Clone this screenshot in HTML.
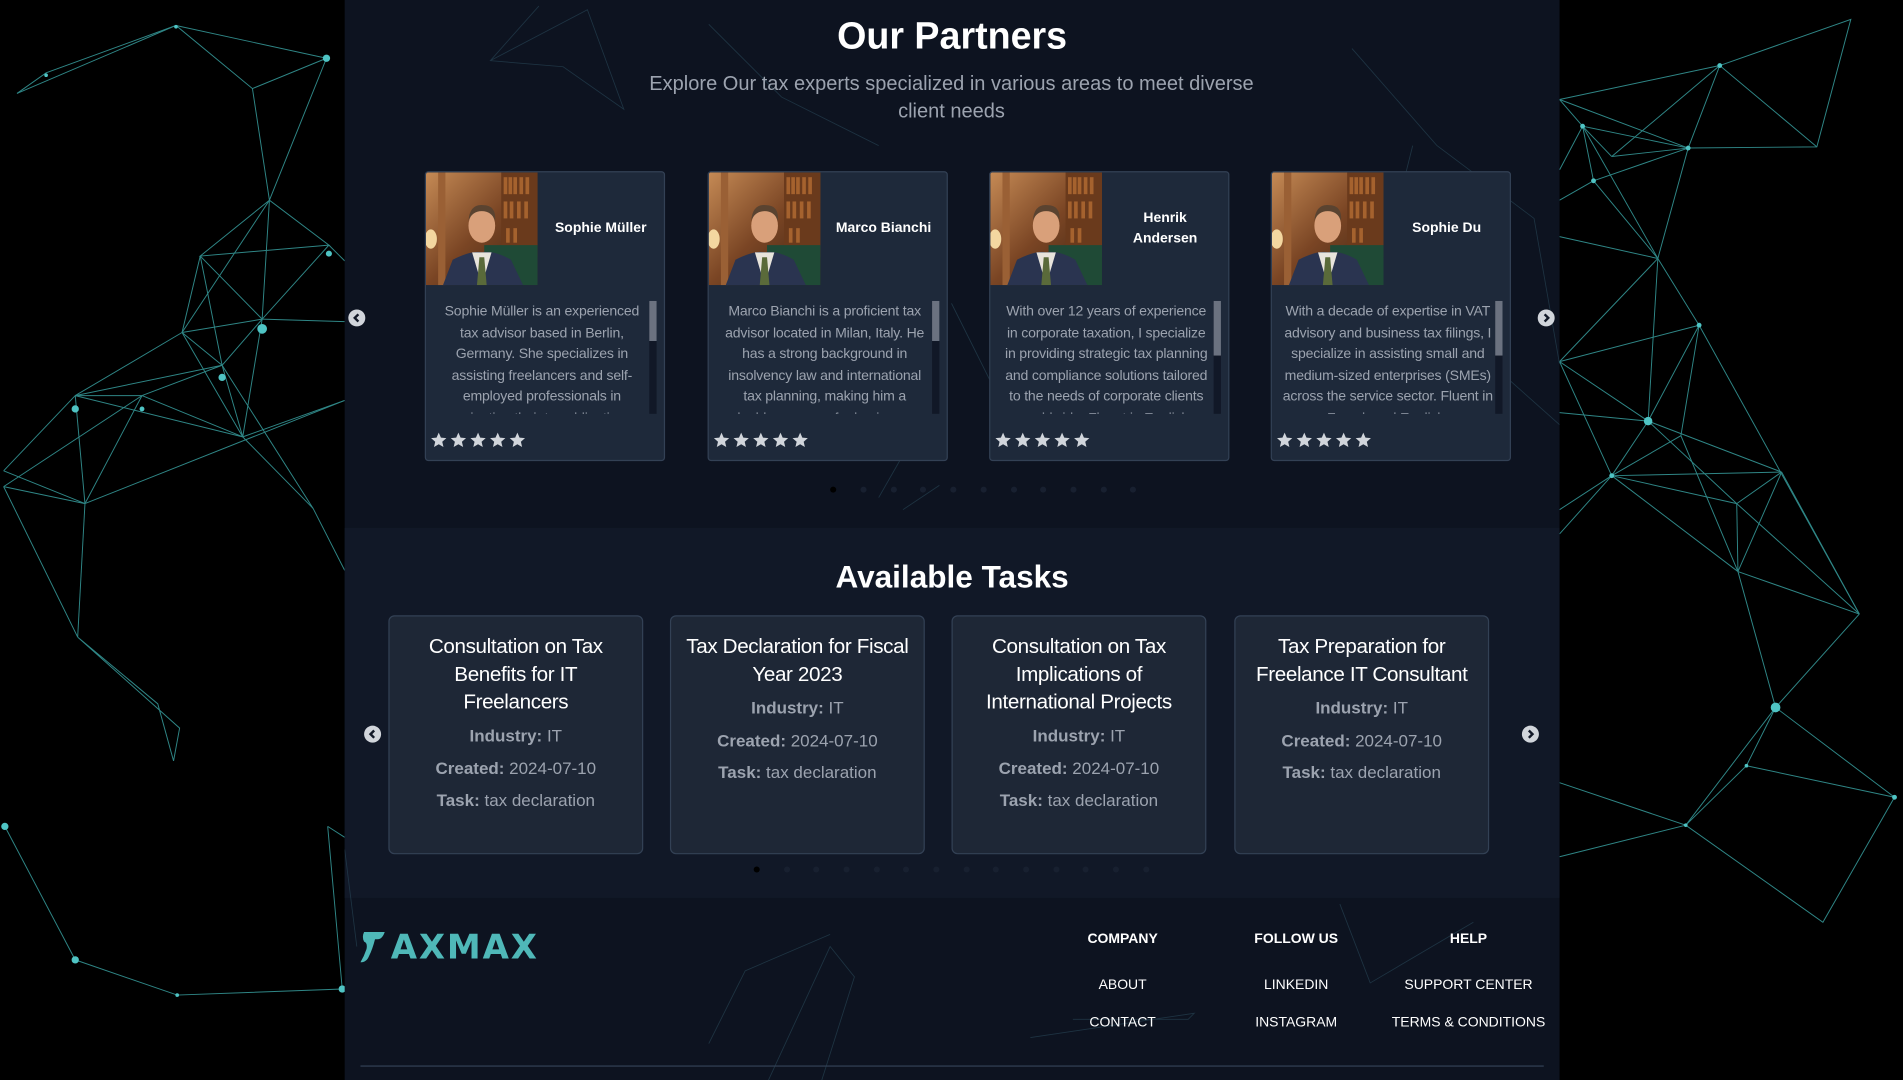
<!DOCTYPE html>
<html><head><meta charset="utf-8">
<style>
html,body{margin:0;padding:0;background:#000;width:1903px;height:1080px;overflow:hidden;}
#s{position:absolute;left:0;top:0;width:1568px;height:890px;transform:scale(1.21365,1.2135);transform-origin:0 0;font-family:"Liberation Sans",Arial,sans-serif;}
.abs{position:absolute}
.panel{left:284px;top:0;width:1001px;height:890px;background:#0d1320;}
.tasksbg{left:284px;top:435px;width:1001px;height:305px;background:#111827;}
h1{position:absolute;margin:0;left:284px;width:1001px;text-align:center;color:#fff;}
.sub{left:530px;width:508px;top:58px;text-align:center;color:#9ca3af;font-size:16.5px;line-height:23px;}
.pc{position:absolute;top:141px;width:196px;height:237px;background:#1e293a;border:1px solid #334155;border-radius:3px;overflow:hidden;}
.pc svg.ph{position:absolute;left:0;top:0;}
.pc .nm{position:absolute;left:92px;width:104px;top:0;height:93px;display:flex;align-items:center;justify-content:center;text-align:center;color:#fff;font-weight:bold;font-size:11.5px;line-height:17px;}
.pc .ds{position:absolute;left:8px;width:175px;top:106px;height:93px;overflow:hidden;color:#9ca3af;font-size:11.6px;line-height:17.5px;text-align:center;letter-spacing:-0.15px;}
.pc .ds p{margin:0;padding:0;}
.pc .sb{position:absolute;left:184px;top:106px;width:6px;height:93px;background:#111827;}
.pc .sb i{position:absolute;left:0;top:0;width:6px;height:33px;background:#6b7280;}
.pc .st{position:absolute;left:4px;top:214px;}
.arr{position:absolute;width:14px;height:14px;border-radius:50%;background:#d1d5db;}
.arr svg{position:absolute;left:0;top:0}
.dot{position:absolute;width:5px;height:5px;border-radius:50%;background:#182030;}
.tc{position:absolute;top:507px;width:210px;height:197px;background:#1e2736;border:1px solid #334155;border-radius:5px;text-align:center;box-sizing:border-box;padding:13px 10px 0;}
.tc .t{color:#fff;font-size:17px;line-height:23px;letter-spacing:-0.3px;}
.tc .f{color:#9ca3af;font-size:14px;line-height:26.5px;}
.tc .f1{margin-top:3px}
.tc b{color:#9ca3af;}
.fh{position:absolute;top:768px;color:#fff;font-weight:bold;font-size:11.5px;width:150px;text-align:center;}
.fl{position:absolute;color:#fff;font-size:11.5px;width:160px;text-align:center;}
</style></head><body>
<div id="s">
<svg class="abs" style="left:0;top:0" width="1568" height="890">
<g stroke="#3fb3b3" stroke-width="0.8" fill="none" opacity="0.75">
<polyline points="14,77 38,60 145,21 208,73 269,48"/>
<line x1="14" y1="77" x2="145" y2="21"/>
<line x1="145" y1="21" x2="269" y2="48"/>
<line x1="208" y1="73" x2="222" y2="165"/>
<line x1="269" y1="48" x2="222" y2="165"/>
<polyline points="222,165 165,211 271,202 222,165 216,263 271,202"/>
<line x1="222" y1="165" x2="150" y2="274"/>
<line x1="165" y1="211" x2="216" y2="263"/>
<line x1="165" y1="211" x2="150" y2="274"/>
<line x1="165" y1="211" x2="183" y2="301"/>
<line x1="150" y1="274" x2="216" y2="263"/>
<line x1="150" y1="274" x2="183" y2="301"/>
<line x1="216" y1="263" x2="183" y2="301"/>
<line x1="216" y1="263" x2="200" y2="360"/>
<line x1="150" y1="274" x2="200" y2="360"/>
<line x1="183" y1="301" x2="200" y2="360"/>
<line x1="150" y1="274" x2="62" y2="326"/>
<line x1="62" y1="326" x2="117" y2="326"/>
<line x1="117" y1="326" x2="183" y2="301"/>
<line x1="62" y1="326" x2="183" y2="301"/>
<line x1="117" y1="326" x2="200" y2="360"/>
<line x1="62" y1="326" x2="200" y2="360"/>
<line x1="117" y1="326" x2="70" y2="415"/>
<line x1="62" y1="326" x2="70" y2="415"/>
<line x1="62" y1="326" x2="3" y2="388"/>
<line x1="117" y1="326" x2="3" y2="401"/>
<line x1="3" y1="388" x2="70" y2="415"/>
<line x1="3" y1="401" x2="70" y2="415"/>
<line x1="200" y1="360" x2="258" y2="419"/>
<line x1="183" y1="301" x2="258" y2="419"/>
<line x1="200" y1="360" x2="284" y2="330"/>
<line x1="70" y1="415" x2="284" y2="330"/>
<line x1="216" y1="263" x2="284" y2="265"/>
<line x1="271" y1="202" x2="284" y2="215"/>
<line x1="3" y1="401" x2="64" y2="525"/>
<line x1="70" y1="415" x2="64" y2="525"/>
<polyline points="64,525 148,600 143,627 130,580 64,525"/>
<line x1="258" y1="419" x2="284" y2="470"/>
<line x1="4" y1="681" x2="62" y2="791"/>
<polyline points="62,791 146,820 282,815 270,681"/>
<line x1="270" y1="681" x2="284" y2="690"/>
<line x1="1285" y1="82" x2="1304" y2="104"/>
<line x1="1285" y1="82" x2="1417" y2="54"/>
<line x1="1285" y1="82" x2="1391" y2="122"/>
<line x1="1304" y1="104" x2="1391" y2="122"/>
<line x1="1304" y1="104" x2="1313" y2="149"/>
<line x1="1304" y1="104" x2="1328" y2="129"/>
<line x1="1304" y1="104" x2="1366" y2="213"/>
<line x1="1313" y1="149" x2="1391" y2="122"/>
<line x1="1328" y1="129" x2="1391" y2="122"/>
<line x1="1328" y1="129" x2="1417" y2="54"/>
<line x1="1313" y1="149" x2="1285" y2="165"/>
<line x1="1313" y1="149" x2="1366" y2="213"/>
<line x1="1304" y1="104" x2="1285" y2="140"/>
<polyline points="1417,54 1525,16 1497,121 1391,122 1417,54 1497,121"/>
<line x1="1391" y1="122" x2="1366" y2="213"/>
<line x1="1285" y1="195" x2="1366" y2="213"/>
<line x1="1366" y1="213" x2="1400" y2="268"/>
<line x1="1366" y1="213" x2="1285" y2="298"/>
<line x1="1366" y1="213" x2="1358" y2="347"/>
<line x1="1285" y1="298" x2="1400" y2="268"/>
<line x1="1400" y1="268" x2="1358" y2="347"/>
<line x1="1400" y1="268" x2="1385" y2="359"/>
<line x1="1400" y1="268" x2="1532" y2="506"/>
<line x1="1285" y1="298" x2="1358" y2="347"/>
<line x1="1285" y1="298" x2="1328" y2="392"/>
<line x1="1285" y1="340" x2="1358" y2="347"/>
<line x1="1358" y1="347" x2="1328" y2="392"/>
<line x1="1358" y1="347" x2="1468" y2="389"/>
<line x1="1358" y1="347" x2="1431" y2="415"/>
<line x1="1385" y1="359" x2="1328" y2="392"/>
<line x1="1385" y1="359" x2="1432" y2="471"/>
<line x1="1328" y1="392" x2="1468" y2="389"/>
<line x1="1328" y1="392" x2="1431" y2="415"/>
<line x1="1328" y1="392" x2="1432" y2="471"/>
<line x1="1328" y1="392" x2="1285" y2="420"/>
<line x1="1328" y1="392" x2="1285" y2="440"/>
<line x1="1468" y1="389" x2="1431" y2="415"/>
<line x1="1468" y1="389" x2="1432" y2="471"/>
<line x1="1468" y1="389" x2="1532" y2="506"/>
<line x1="1431" y1="415" x2="1432" y2="471"/>
<line x1="1431" y1="415" x2="1532" y2="506"/>
<line x1="1432" y1="471" x2="1532" y2="506"/>
<line x1="1432" y1="471" x2="1463" y2="583"/>
<line x1="1532" y1="506" x2="1463" y2="583"/>
<polyline points="1463,583 1439,631 1389,680 1463,583 1561,657 1502,760 1389,680 1285,645"/>
<line x1="1439" y1="631" x2="1561" y2="657"/>
<line x1="1389" y1="680" x2="1285" y2="706"/>
</g>
<g fill="#4fc4c4">
<circle cx="269" cy="48" r="3"/><circle cx="216" cy="271" r="4"/><circle cx="271" cy="209" r="2.5"/><circle cx="183" cy="311" r="3"/><circle cx="62" cy="337" r="3"/><circle cx="117" cy="337" r="2"/><circle cx="38" cy="62" r="1.5"/><circle cx="145" cy="22" r="1.5"/><circle cx="4" cy="681" r="3"/><circle cx="62" cy="791" r="3"/><circle cx="146" cy="820" r="1.5"/><circle cx="282" cy="815" r="3"/>
<circle cx="1304" cy="104" r="2"/><circle cx="1391" cy="122" r="2"/><circle cx="1417" cy="54" r="2"/><circle cx="1400" cy="268" r="2"/><circle cx="1358" cy="347" r="3.5"/><circle cx="1328" cy="392" r="2"/><circle cx="1463" cy="583" r="4"/><circle cx="1561" cy="657" r="2"/><circle cx="1389" cy="680" r="1.5"/><circle cx="1439" cy="631" r="1.5"/><circle cx="1313" cy="149" r="2"/>
</g>
</svg>
<div class="abs panel"></div>
<div class="abs tasksbg"></div>
<svg class="abs" style="left:284px;top:0" width="1001" height="890">
<g stroke="#2a4a5a" stroke-width="0.7" fill="none" opacity="0.6">
<polyline points="160,5 120,50 180,55 230,90 200,8 120,50"/>
<polyline points="300,20 360,80 440,120"/>
<polyline points="830,40 900,120 980,180 1001,300"/>
<polyline points="880,120 860,200 900,260 1001,350"/>
<line x1="500" y1="250" x2="540" y2="330"/>
<line x1="440" y1="410" x2="480" y2="340"/>
<line x1="460" y1="420" x2="490" y2="400"/>
<polyline points="340,910 400,780 420,805 390,900"/>
<polyline points="300,860 330,800 400,770"/>
<polyline points="565,855 700,835 695,840 600,840"/>
<polyline points="820,745 845,810 930,760"/>
<line x1="0" y1="700" x2="10" y2="780"/>
</g>
</svg>

<h1 style="top:12px;font-size:31px;font-weight:900;">Our Partners</h1>
<div class="abs sub">Explore Our tax experts specialized in various areas to meet diverse client needs</div>

<svg width="0" height="0" style="position:absolute"><defs>
<linearGradient id="bg" x1="0" y1="0" x2="1" y2="1"><stop offset="0" stop-color="#c58a55"/><stop offset="0.5" stop-color="#7a4524"/><stop offset="1" stop-color="#3a2213"/></linearGradient>
<symbol id="por" viewBox="0 0 92 93">
<rect width="92" height="93" fill="url(#bg)"/>
<rect x="62" y="0" width="30" height="70" fill="#6a3a1c"/>
<g fill="#a5622e"><rect x="64" y="4" width="3" height="14"/><rect x="68" y="4" width="3" height="14"/><rect x="72" y="4" width="3" height="14"/><rect x="77" y="4" width="3" height="14"/><rect x="82" y="4" width="3" height="14"/><rect x="64" y="24" width="3" height="14"/><rect x="69" y="24" width="3" height="14"/><rect x="75" y="24" width="3" height="14"/><rect x="81" y="24" width="3" height="14"/><rect x="66" y="46" width="3" height="12"/><rect x="72" y="46" width="3" height="12"/></g>
<rect x="10" y="0" width="6" height="93" fill="#9a6035"/>
<ellipse cx="4" cy="55" rx="5" ry="8" fill="#f3d7a0"/>
<rect x="48" y="60" width="44" height="33" fill="#1f4a36"/>
<path d="M14 93 L22 72 Q38 64 46 66 Q56 64 70 72 L80 93Z" fill="#2a3450"/>
<path d="M38 66 L46 93 L54 66Z" fill="#e8e4dc"/>
<path d="M44 70 L48 70 L50 93 L42 93Z" fill="#5a6a3a"/>
<ellipse cx="46" cy="44" rx="11" ry="14" fill="#d9a07a"/>
<path d="M35 40 Q36 26 47 27 Q58 27 57 40 Q54 32 46 32 Q38 32 35 40Z" fill="#5a4330"/>
</symbol>
<symbol id="stars" viewBox="0 0 82 14">
<g fill="#d1d5db">
<path id="st" d="M6.5 0.5 L8.3 4.6 L12.8 5 L9.4 8 L10.4 12.4 L6.5 10.1 L2.6 12.4 L3.6 8 L0.2 5 L4.7 4.6Z"/>
<use href="#st" x="16.2"/><use href="#st" x="32.4"/><use href="#st" x="48.6"/><use href="#st" x="64.8"/>
</g></symbol>
</defs></svg>

<div class="pc" style="left:350px"><svg class="ph" width="92" height="93"><use href="#por"/></svg><div class="nm">Sophie Müller</div>
<div class="ds"><p>Sophie Müller is an experienced tax advisor based in Berlin, Germany. She specializes in assisting freelancers and self-employed professionals in navigating their tax obligations.</p></div><div class="sb"><i></i></div>
<svg class="st" width="82" height="14"><use href="#stars"/></svg></div>
<div class="pc" style="left:583px"><svg class="ph" width="92" height="93"><use href="#por"/></svg><div class="nm">Marco Bianchi</div>
<div class="ds"><p>Marco Bianchi is a proficient tax advisor located in Milan, Italy. He has a strong background in insolvency law and international tax planning, making him a valuable resource for businesses.</p></div><div class="sb"><i></i></div>
<svg class="st" width="82" height="14"><use href="#stars"/></svg></div>
<div class="pc" style="left:815px"><svg class="ph" width="92" height="93"><use href="#por"/></svg><div class="nm">Henrik<br>Andersen</div>
<div class="ds"><p>With over 12 years of experience in corporate taxation, I specialize in providing strategic tax planning and compliance solutions tailored to the needs of corporate clients worldwide. Fluent in English.</p></div><div class="sb"><i style="height:45px"></i></div>
<svg class="st" width="82" height="14"><use href="#stars"/></svg></div>
<div class="pc" style="left:1047px"><svg class="ph" width="92" height="93"><use href="#por"/></svg><div class="nm">Sophie Du</div>
<div class="ds"><p>With a decade of expertise in VAT advisory and business tax filings, I specialize in assisting small and medium-sized enterprises (SMEs) across the service sector. Fluent in French and English.</p></div><div class="sb"><i style="height:45px"></i></div>
<svg class="st" width="82" height="14"><use href="#stars"/></svg></div>

<div class="arr" style="left:287px;top:255px"><svg width="14" height="14"><path d="M8.3 4 L5.3 7 L8.3 10" stroke="#111827" stroke-width="2" fill="none"/></svg></div>
<div class="arr" style="left:1267px;top:255px"><svg width="14" height="14"><path d="M5.7 4 L8.7 7 L5.7 10" stroke="#111827" stroke-width="2" fill="none"/></svg></div>

<div class="dot" style="left:684px;top:401px;background:#000"></div>
<div class="dot" style="left:709px;top:401px"></div><div class="dot" style="left:734px;top:401px"></div><div class="dot" style="left:758px;top:401px"></div><div class="dot" style="left:783px;top:401px"></div><div class="dot" style="left:808px;top:401px"></div><div class="dot" style="left:833px;top:401px"></div><div class="dot" style="left:857px;top:401px"></div><div class="dot" style="left:882px;top:401px"></div><div class="dot" style="left:907px;top:401px"></div><div class="dot" style="left:931px;top:401px"></div>

<h1 style="top:460px;font-size:26px;font-weight:bold;">Available Tasks</h1>

<div class="tc" style="left:320px"><div class="t">Consultation on Tax Benefits for IT Freelancers</div><div class="f f1"><b>Industry:</b> IT</div><div class="f"><b>Created:</b> 2024-07-10</div><div class="f"><b>Task:</b> tax declaration</div></div>
<div class="tc" style="left:552px"><div class="t">Tax Declaration for Fiscal Year 2023</div><div class="f f1"><b>Industry:</b> IT</div><div class="f"><b>Created:</b> 2024-07-10</div><div class="f"><b>Task:</b> tax declaration</div></div>
<div class="tc" style="left:784px"><div class="t">Consultation on Tax Implications of International Projects</div><div class="f f1"><b>Industry:</b> IT</div><div class="f"><b>Created:</b> 2024-07-10</div><div class="f"><b>Task:</b> tax declaration</div></div>
<div class="tc" style="left:1017px"><div class="t">Tax Preparation for Freelance IT Consultant</div><div class="f f1"><b>Industry:</b> IT</div><div class="f"><b>Created:</b> 2024-07-10</div><div class="f"><b>Task:</b> tax declaration</div></div>

<div class="arr" style="left:300px;top:598px"><svg width="14" height="14"><path d="M8.3 4 L5.3 7 L8.3 10" stroke="#111827" stroke-width="2" fill="none"/></svg></div>
<div class="arr" style="left:1254px;top:598px"><svg width="14" height="14"><path d="M5.7 4 L8.7 7 L5.7 10" stroke="#111827" stroke-width="2" fill="none"/></svg></div>

<div class="dot" style="left:621px;top:714px;background:#000"></div>
<div class="dot" style="left:646px;top:714px"></div><div class="dot" style="left:670px;top:714px"></div><div class="dot" style="left:695px;top:714px"></div><div class="dot" style="left:720px;top:714px"></div><div class="dot" style="left:744px;top:714px"></div><div class="dot" style="left:769px;top:714px"></div><div class="dot" style="left:794px;top:714px"></div><div class="dot" style="left:818px;top:714px"></div><div class="dot" style="left:843px;top:714px"></div><div class="dot" style="left:868px;top:714px"></div><div class="dot" style="left:892px;top:714px"></div><div class="dot" style="left:917px;top:714px"></div><div class="dot" style="left:942px;top:714px"></div>

<svg class="abs" style="left:296px;top:766px" width="22" height="28"><path d="M4 2 L21 2 Q19 8 15 8 L13 8 Q11 16 8 22 Q6 27 1 27 Q4 22 6 16 Q7 11 4 10 Q2 6 4 2Z" fill="#4fb8b8"/></svg>
<div class="abs" style="left:322px;top:764px;color:#4fb8b8;font-weight:bold;font-size:28px;letter-spacing:1.5px;font-family:'DejaVu Sans','Liberation Sans',sans-serif;">AXMAX</div>

<div class="fh" style="left:850px">COMPANY</div>
<div class="fh" style="left:993px">FOLLOW US</div>
<div class="fh" style="left:1135px">HELP</div>
<div class="fl" style="left:845px;top:806px">ABOUT</div>
<div class="fl" style="left:845px;top:837px">CONTACT</div>
<div class="fl" style="left:988px;top:806px">LINKEDIN</div>
<div class="fl" style="left:988px;top:837px">INSTAGRAM</div>
<div class="fl" style="left:1130px;top:806px">SUPPORT CENTER</div>
<div class="fl" style="left:1120px;top:837px;width:180px">TERMS &amp; CONDITIONS</div>
<div class="abs" style="left:297px;top:878px;width:975px;height:1px;background:#334155"></div>
</div>
</body></html>
